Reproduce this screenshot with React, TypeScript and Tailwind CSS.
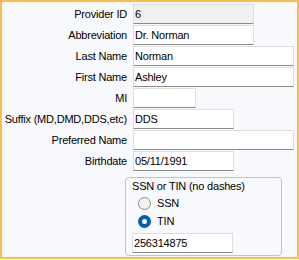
import React from "react";

type Field = {
  label: string;
  value: string;
  width: string;
  disabled?: boolean;
};

const fields: Field[] = [
  { label: "Provider ID", value: "6", width: "w-[121px]", disabled: true },
  { label: "Abbreviation", value: "Dr. Norman", width: "w-[121px]" },
  { label: "Last Name", value: "Norman", width: "w-[161px]" },
  { label: "First Name", value: "Ashley", width: "w-[161px]" },
  { label: "MI", value: "", width: "w-[63px]" },
  { label: "Suffix (MD,DMD,DDS,etc)", value: "DDS", width: "w-[101px]" },
  { label: "Preferred Name", value: "", width: "w-[161px]" },
  { label: "Birthdate", value: "05/11/1991", width: "w-[101px]" },
];

function TextBox({ value, width, disabled }: { value: string; width: string; disabled?: boolean }) {
  return (
    <div
      className={`h-[20px] ${width} border border-[#dedede] border-b-[#8c8c8c] ${
        disabled ? "bg-[#f0f0f0]" : "bg-white"
      } pl-[1px] flex items-center text-black`}
    >
      {value}
    </div>
  );
}

function Radio({ label, checked }: { label: string; checked?: boolean }) {
  return (
    <div className="flex items-center h-[13px] gap-[6px] pl-[12px]">
      {checked ? (
        <span className="w-[13px] h-[13px] rounded-full bg-[#005fb8] flex items-center justify-center">
          <span className="w-[5px] h-[5px] rounded-full bg-white" />
        </span>
      ) : (
        <span className="w-[13px] h-[13px] rounded-full bg-[#f3f3f3] border border-[#8a8a8a]" />
      )}
      <span className="text-black">{label}</span>
    </div>
  );
}

export default function App() {
  return (
    <div
      className="w-[299px] h-[259px] border-2 border-[#fbbd4e] bg-[#f8f9fd] text-[11px] tracking-[-0.2px] text-black"
      style={{ fontFamily: '"Liberation Sans", Arial, sans-serif' }}
    >
      <div className="flex flex-col gap-[1px] pt-[2px]">
        {fields.map((f) => (
          <div key={f.label} className="flex items-center h-[20px]">
            <div className="w-[125px] text-right whitespace-nowrap">{f.label}</div>
            <div className="ml-[6px]">
              <TextBox value={f.value} width={f.width} disabled={f.disabled} />
            </div>
          </div>
        ))}
      </div>

      <div className="ml-[123px] mt-[6px] w-[157px] h-[79px] border border-[#c4c4c4] rounded-[4px] flex flex-col">
        <div className="pl-[6px] pt-[1px] leading-[14px]">SSN or TIN (no dashes)</div>
        <div className="flex flex-col gap-[5px] mt-[4px]">
          <Radio label="SSN" />
          <Radio label="TIN" checked />
        </div>
        <div className="ml-[6px] mt-[5px]">
          <TextBox value="256314875" width="w-[101px]" />
        </div>
      </div>
    </div>
  );
}
